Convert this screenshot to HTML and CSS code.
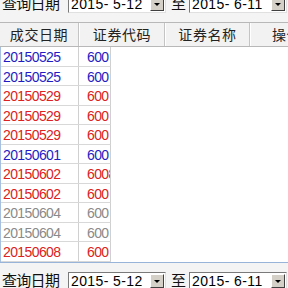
FILE: index.html
```html
<!DOCTYPE html>
<html lang="zh-CN">

<head>
  <meta charset="UTF-8">
  <meta name="viewport" content="width=device-width, initial-scale=1.0">
  <title>成交查询</title>
  <link rel="stylesheet" href="styles.css">
</head>

<body>
  <div class="page">
    <div class="query query-top">
      <span class="label">查询日期</span>
      <div class="date">
        <span class="date-text">2015- 5-12</span>
        <span class="drop"></span>
      </div>
      <span class="to">至</span>
      <div class="date">
        <span class="date-text">2015- 6-11</span>
        <span class="drop"></span>
      </div>
    </div>

    <div class="grid">
      <div class="head">
        <div class="th c1">成交日期</div>
        <div class="th c2">证券代码</div>
        <div class="th c3">证券名称</div>
        <div class="th c4">操作</div>
      </div>
      <div class="rows">
        <div class="row blue"><div class="td d">20150525</div><div class="td k">600</div></div>
        <div class="row blue"><div class="td d">20150525</div><div class="td k">600</div></div>
        <div class="row red"><div class="td d">20150529</div><div class="td k">600</div></div>
        <div class="row red"><div class="td d">20150529</div><div class="td k">600</div></div>
        <div class="row red"><div class="td d">20150529</div><div class="td k">600</div></div>
        <div class="row blue"><div class="td d">20150601</div><div class="td k">600</div></div>
        <div class="row red"><div class="td d">20150602</div><div class="td k">6008</div></div>
        <div class="row red"><div class="td d">20150602</div><div class="td k">600</div></div>
        <div class="row gray"><div class="td d">20150604</div><div class="td k">600</div></div>
        <div class="row gray"><div class="td d">20150604</div><div class="td k">600</div></div>
        <div class="row red"><div class="td d">20150608</div><div class="td k">600</div></div>
      </div>
    </div>

    <div class="query query-bottom">
      <span class="label">查询日期</span>
      <div class="date">
        <span class="date-text">2015- 5-12</span>
        <span class="drop"></span>
      </div>
      <span class="to">至</span>
      <div class="date">
        <span class="date-text">2015- 6-11</span>
        <span class="drop"></span>
      </div>
    </div>
  </div>
</body>

</html>
```

FILE: styles.css
```css
html,
body {
  margin: 0;
  height: 100%;
  overflow: hidden;
  background: #fff;
}

.page {
  width: 288px;
  height: 288px;
  overflow: hidden;
  font-family: "Liberation Sans", "Noto Sans CJK SC", sans-serif;
}

/* 查询栏 */
.query {
  display: flex;
  align-items: flex-start;
  background: #f4f4f4;
  white-space: nowrap;
}

.query-top {
  height: 27px;
  margin-top: -5px;
}

.query-bottom {
  height: 26px;
  padding-top: 9px;
  border-top: 1px solid #98b4d8;
}

.label {
  width: 68px;
  padding-left: 2px;
  box-sizing: border-box;
  font-family: "Noto Sans CJK SC", sans-serif;
  font-size: 15px;
  letter-spacing: -0.7px;
  line-height: 16px;
  color: #111;
}

.to {
  width: 23px;
  padding-left: 5px;
  box-sizing: border-box;
  font-family: "Noto Sans CJK SC", sans-serif;
  font-size: 15px;
  line-height: 16px;
  color: #111;
}

.date {
  display: flex;
  align-items: center;
  width: 98px;
  height: 18px;
  box-sizing: border-box;
  border: 1px solid #7a7a7a;
  border-right-color: #e0e0e0;
  border-bottom-color: #e0e0e0;
  background: #fff;
  padding: 0 1px 0 2px;
}

.date-text {
  flex: 1;
  font-size: 14px;
  letter-spacing: 0.4px;
  line-height: 16px;
  color: #000;
}

.drop {
  position: relative;
  width: 14px;
  height: 14px;
  box-sizing: border-box;
  background: #d4d0c8;
  border: 1px solid;
  border-color: #fff #404040 #404040 #fff;
}

.drop::after {
  content: "";
  position: absolute;
  left: 3px;
  top: 5px;
  border-left: 3px solid transparent;
  border-right: 3px solid transparent;
  border-top: 3px solid #000;
}

/* 表格 */
.head {
  display: flex;
  height: 25px;
  box-sizing: border-box;
  border-top: 1px solid #b8b8b8;
  border-bottom: 1px solid #b8b8b8;
  background: #f2f2f2;
}

.th {
  flex: none;
  box-sizing: border-box;
  border-right: 1px solid #c4c4c4;
  border-left: 1px solid #fff;
  text-align: center;
  font-family: "Noto Sans CJK SC", sans-serif;
  font-size: 14px;
  letter-spacing: 0.6px;
  line-height: 22px;
  color: #222;
}

.c1 { width: 79px; border-left: none; }
.c2 { width: 86px; }
.c3 { width: 85px; }
.c4 { width: 73px; }

.rows {
  height: 215px;
  border-left: 1px solid #a8c0e0;
}

.row {
  display: flex;
  width: 110px;
  height: 19.5px;
  box-sizing: border-box;
  border-bottom: 1px solid #d8d8d8;
  border-right: 1px solid #d0d0d0;
}

.td {
  overflow: hidden;
  white-space: nowrap;
  font-size: 14px;
  letter-spacing: -0.6px;
  line-height: 20px;
}

.d {
  width: 78px;
  padding-left: 2px;
  box-sizing: border-box;
  border-right: 1px solid #d0d0d0;
}

.k {
  flex: 1;
  padding-left: 8px;
}

.blue { color: #1e1ec4; }
.red { color: #dc2222; }
.gray { color: #8a8a8a; }
```
